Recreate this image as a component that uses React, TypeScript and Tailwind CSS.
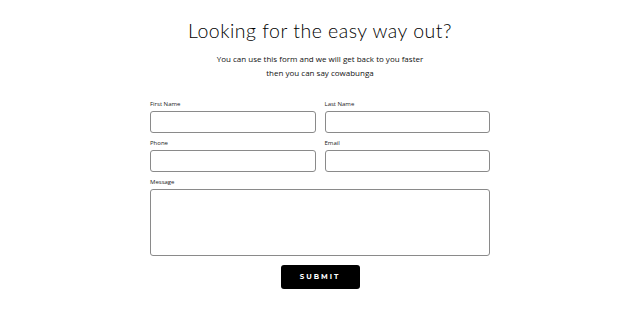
import React from "react";

function Field({ label, className = "" }: { label: string; className?: string }) {
  return (
    <div className={"flex flex-col " + className}>
      <label className="text-[6px] leading-[7px] text-[#222] mb-[3px] font-['Open_Sans',sans-serif]">{label}</label>
      <input className="h-[22px] w-full border border-[#8a8a8a] rounded-[3px] bg-white outline-none" />
    </div>
  );
}

export default function App() {
  return (
    <div className="w-[640px] h-[315px] bg-white flex flex-col items-center pt-[19px] font-['Open_Sans',sans-serif]">
      <h1 className="text-[19.5px] leading-[24px] font-light tracking-[0.5px] text-black font-['Lato',sans-serif]">
        Looking for the easy way out?
      </h1>
      <p className="mt-[9px] text-[8px] leading-[14px] text-[#111] text-center">
        You can use this form and we will get back to you faster
        <br />
        then you can say cowabunga
      </p>
      <form className="mt-[21px] w-[340px] flex flex-col gap-[7px]">
        <div className="grid grid-cols-2 gap-x-[9px]">
          <Field label="First Name" />
          <Field label="Last Name" />
        </div>
        <div className="grid grid-cols-2 gap-x-[9px]">
          <Field label="Phone" />
          <Field label="Email" />
        </div>
        <div className="flex flex-col">
          <label className="text-[6px] leading-[7px] text-[#222] mb-[3px]">Message</label>
          <textarea className="h-[67px] w-full border border-[#8a8a8a] rounded-[3px] bg-white outline-none resize-none" />
        </div>
        <div className="flex justify-center mt-[2px]">
          <button
            type="button"
            className="w-[79px] h-[24px] bg-black text-white rounded-[3px] text-[7px] font-bold tracking-[2px] font-['Montserrat','Lato',sans-serif]"
          >
            SUBMIT
          </button>
        </div>
      </form>
    </div>
  );
}
